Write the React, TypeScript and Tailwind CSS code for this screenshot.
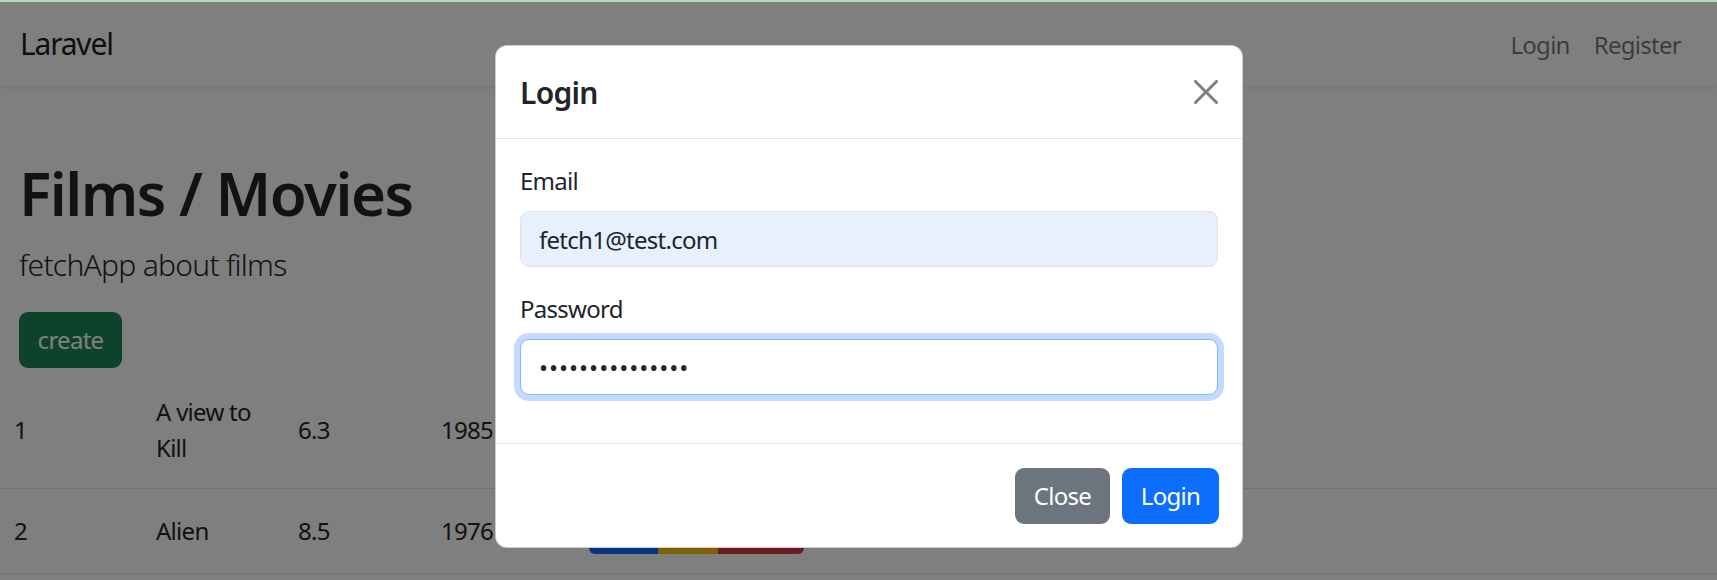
import React from 'react';

const films = [
  { id: 1, title: ['A view to', 'Kill'], rating: '6.3', year: '1985', h: 'h-[117px]' },
  { id: 2, title: ['Alien'], rating: '8.5', year: '1976', h: 'h-[85px]' },
];

function CloseIcon() {
  return (
    <svg viewBox="0 0 16 16" className="h-[24px] w-[24px]" fill="#000" fillOpacity={0.5}>
      <path d="M.293.293a1 1 0 0 1 1.414 0L8 6.586 14.293.293a1 1 0 1 1 1.414 1.414L9.414 8l6.293 6.293a1 1 0 0 1-1.414 1.414L8 9.414l-6.293 6.293a1 1 0 0 1-1.414-1.414L6.586 8 .293 1.707a1 1 0 0 1 0-1.414z" />
    </svg>
  );
}

export default function App() {
  return (
    <div className="relative h-[580px] w-full overflow-hidden bg-white font-['Noto_Sans',_'Open_Sans',_sans-serif] text-[24px] leading-[36px] tracking-[-0.03em] text-[#212529]">
      <nav className="flex h-[86px] items-center justify-between pl-[20px] pr-[24px] shadow-[0_2px_4px_rgba(0,0,0,0.075)]">
        <span className="text-[30px] leading-[45px] tracking-[-0.04em] text-black/90">Laravel</span>
        <div className="flex pt-[3px]">
          <span className="px-[12px] text-black/55">Login</span>
          <span className="px-[12px] text-black/55">Register</span>
        </div>
      </nav>

      <main className="pl-[19px] pt-[71px]">
        <h1 className="text-[60px] font-semibold leading-[72px] tracking-[-0.025em]">Films / Movies</h1>
        <p className="mt-[13px] text-[30px] font-light leading-[45px]">fetchApp about films</p>
        <button type="button" className="mt-[25px] h-[56px] w-[103px] rounded-[9px] bg-[#198754] text-white">
          create
        </button>
      </main>

      <div className="mt-[4px]">
        {films.map((film) => (
          <div key={film.id} className={`grid ${film.h} grid-cols-[156px_142px_143px_148px_1fr] items-center border-b border-[#dee2e6]`}>
            <div className="pl-[14px]">{film.id}</div>
            <div>
              {film.title.map((line) => (
                <div key={line}>{line}</div>
              ))}
            </div>
            <div>{film.rating}</div>
            <div>{film.year}</div>
            <div className="flex text-[21px] leading-[31px] text-white">
              <span className="w-[69px] rounded-l-[6px] bg-[#0d6efd] py-[7px] text-center">show</span>
              <span className="w-[60px] bg-[#ffc107] py-[7px] text-center text-black">edit</span>
              <span className="w-[86px] rounded-r-[6px] bg-[#dc3545] py-[7px] text-center">delete</span>
            </div>
          </div>
        ))}
      </div>

      <div className="absolute inset-0 bg-black/50" />
      <div className="absolute inset-x-0 top-0 h-[2px] bg-[#bcd9bc]" />

      <div className="absolute inset-0 pl-[495px] pt-[45px]">
        <div className="w-[748px] overflow-hidden rounded-[12px] border border-black/20 bg-white">
          <div className="flex h-[93px] items-center justify-between border-b border-[#dee2e6] px-[24px]">
            <h5 className="text-[30px] font-semibold leading-[45px]">Login</h5>
            <button type="button" aria-label="Close">
              <CloseIcon />
            </button>
          </div>

          <div className="p-[24px]">
            <div className="mb-[24px]">
              <label className="mb-[12px] block">Email</label>
              <input
                type="email"
                readOnly
                value="fetch1@test.com"
                className="block h-[56px] w-full rounded-[9px] border border-[#dee2e6] bg-[#e8f0fe] px-[18px] text-[24px] tracking-[-0.03em] text-[#212529] outline-none"
              />
            </div>
            <div className="mb-[24px]">
              <label className="mb-[12px] block">Password</label>
              <input
                type="password"
                readOnly
                value="fetchpassword12"
                className="block h-[56px] w-full rounded-[9px] border border-[#86b7fe] bg-white px-[18px] text-[24px] tracking-[1px] text-[#212529] shadow-[0_0_0_6px_rgba(13,110,253,0.25)] outline-none"
              />
            </div>
          </div>

          <div className="flex h-[104px] items-center justify-end gap-[12px] border-t border-[#dee2e6] px-[23px]">
            <button type="button" className="h-[56px] w-[95px] rounded-[9px] bg-[#6c757d] text-white">
              Close
            </button>
            <button type="button" className="h-[56px] w-[97px] rounded-[9px] bg-[#0d6efd] text-white">
              Login
            </button>
          </div>
        </div>
      </div>
    </div>
  );
}
